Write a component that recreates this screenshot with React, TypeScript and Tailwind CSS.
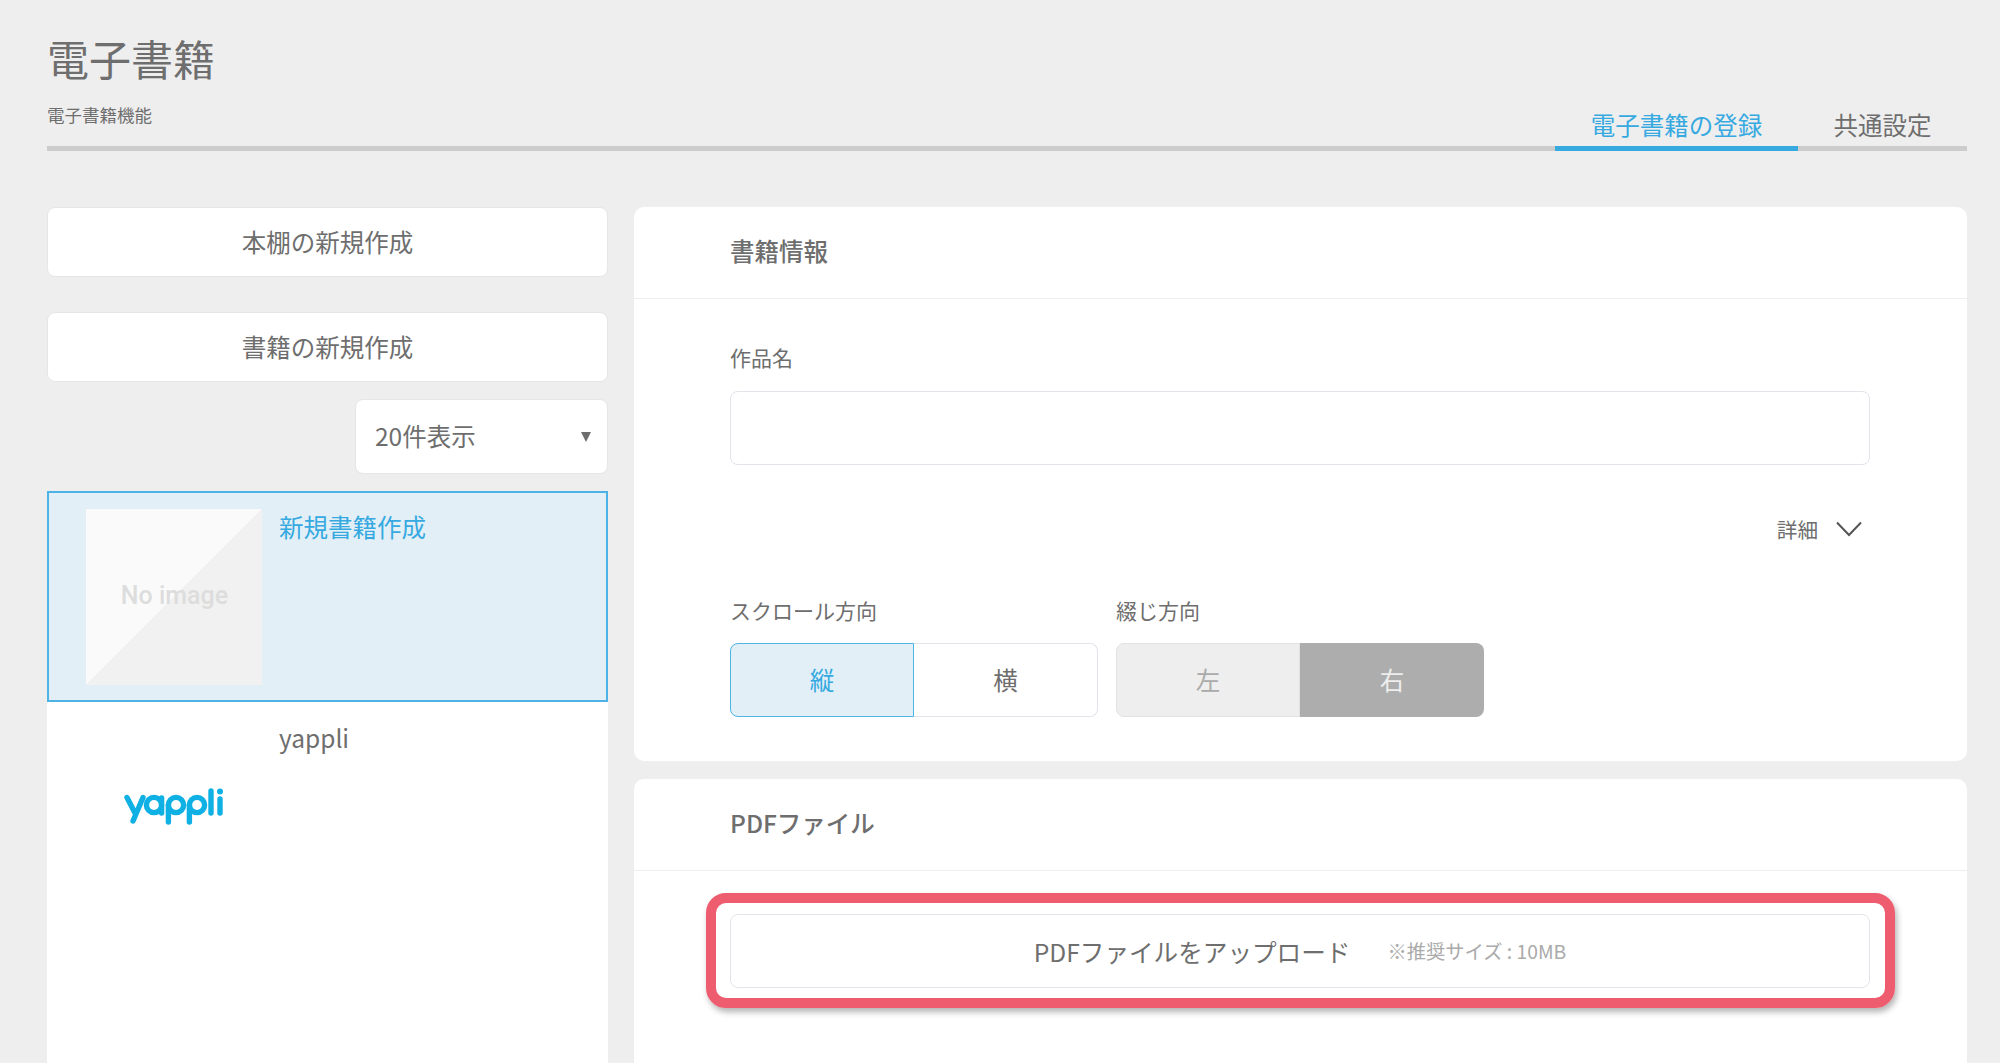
import React from "react";

function Logo() {
  return (
    <svg width="100" height="38" viewBox="0 0 100 38" fill="none" stroke="#0fb0e4" strokeWidth="5.4" strokeLinecap="round" aria-label="yappli">
      <path d="M3 9.5 L11 25 M19 9.5 L9 33" />
      <circle cx="30" cy="17" r="7.6" />
      <path d="M37.6 10 V25" />
      <circle cx="52" cy="17" r="7.6" />
      <path d="M44.4 17 V34" />
      <circle cx="73" cy="17" r="7.6" />
      <path d="M65.4 17 V34" />
      <path d="M87 3 V25" />
      <path d="M96 11 V25" />
      <circle cx="96" cy="3.5" r="3" fill="#0fb0e4" stroke="none" />
    </svg>
  );
}

export default function App() {
  return (
    <div className="h-[1063px] overflow-hidden bg-[#eeeeee] pl-[47px] pr-[33px] font-['Noto_Sans_CJK_JP','Noto_Sans',sans-serif] font-normal text-[#6e6e6e]">
      <header className="flex h-[151px] items-end justify-between border-b-[5px] border-[#cccccc]">
        <div className="pb-[18px]">
          <h1 className="text-[42px] leading-[60px] font-normal">電子書籍</h1>
          <p className="mt-[14px] text-[17.5px] leading-[26px]">電子書籍機能</p>
        </div>
        <nav className="-mb-[5px] flex text-[24.5px] leading-[36px]">
          <a className="w-[243px] border-b-[5px] border-[#36a9e1] pb-[3px] text-center text-[#36a9e1]">電子書籍の登録</a>
          <a className="w-[169px] border-b-[5px] border-transparent pb-[3px] text-center">共通設定</a>
        </nav>
      </header>

      <main className="mt-[56px] flex gap-[26px]">
        <aside className="flex w-[561px] flex-col">
          <button className="h-[70px] rounded-lg border border-[#e6e6e6] bg-white text-[24.5px]">本棚の新規作成</button>
          <button className="mt-[35px] h-[70px] rounded-lg border border-[#e6e6e6] bg-white text-[24.5px]">書籍の新規作成</button>
          <div className="mt-[17px] flex h-[75px] w-[253px] items-center justify-between self-end rounded-lg border border-[#e6e6e6] bg-white pl-[19px] pr-[16px] text-[24.5px]">
            <span>20件表示</span>
            <span className="h-0 w-0 border-x-[5.5px] border-t-[10px] border-x-transparent border-t-[#6e6e6e]" />
          </div>
          <div className="mt-[17px] h-[600px] bg-white">
            <div className="flex h-[211px] gap-[17px] border-2 border-[#4db3e6] bg-[#e2eff6] pl-[37px] pt-[16px]">
              <div className="flex h-[176px] w-[176px] items-center justify-center bg-[linear-gradient(to_bottom_right,#fafafa_50%,#f1f1f1_50%)] pb-[2px] pl-[1px] font-['Roboto',sans-serif] text-[25px] font-medium text-[#dddddd]">
                No image
              </div>
              <div className="text-[24.5px] leading-[36px] text-[#36a9e1]">新規書籍作成</div>
            </div>
            <div className="flex gap-[17px] pl-[39px] pt-[18px]">
              <div className="flex h-[175px] w-[176px] justify-center pt-[68px]">
                <Logo />
              </div>
              <div className="text-[24.5px] leading-[36px]">yappli</div>
            </div>
          </div>
        </aside>

        <section className="flex flex-1 flex-col gap-[18px]">
          <div className="h-[554px] rounded-[10px] bg-white">
            <h2 className="flex h-[92px] items-center border-b border-[#eeeeee] pb-[3px] pl-[96px] text-[24.5px] font-medium">書籍情報</h2>
            <div className="pl-[96px] pr-[97px]">
              <label className="mt-[43px] block text-[21px] leading-[30px]">作品名</label>
              <div className="mt-[19px] h-[74px] rounded-lg border border-[#e2e4ea]" />
              <div className="mt-[49px] flex h-[30px] items-center justify-end gap-[18px] pr-[8px]">
                <span className="text-[20.6px]">詳細</span>
                <svg width="26" height="16" viewBox="0 0 26 16" fill="none" stroke="#555555" strokeWidth="2">
                  <path d="M1 1.5 L13 14 L25 1.5" />
                </svg>
              </div>
              <div className="mt-[51px] flex gap-[18px]">
                <div>
                  <div className="text-[21px] leading-[30px]">スクロール方向</div>
                  <div className="mt-[18px] flex h-[74px] text-[24.5px]">
                    <div className="flex w-[184px] items-center justify-center rounded-l-lg border border-[#4db3e6] bg-[#e2eff6] text-[#36a9e1]">縦</div>
                    <div className="flex w-[184px] items-center justify-center rounded-r-lg border border-l-0 border-[#e2e4ea]">横</div>
                  </div>
                </div>
                <div>
                  <div className="text-[21px] leading-[30px]">綴じ方向</div>
                  <div className="mt-[18px] flex h-[74px] text-[24.5px]">
                    <div className="flex w-[184px] items-center justify-center rounded-l-lg border border-[#e2e2e2] bg-[#eeeeee] text-[#aaaaaa]">左</div>
                    <div className="flex w-[184px] items-center justify-center rounded-r-lg bg-[#adadad] text-[#eeeeee]">右</div>
                  </div>
                </div>
              </div>
            </div>
          </div>

          <div className="h-[400px] rounded-[10px] bg-white">
            <h2 className="flex h-[92px] items-center border-b border-[#eeeeee] pb-[3px] pl-[96px] text-[24.5px] font-medium">PDFファイル</h2>
            <div className="relative ml-[96px] mr-[97px] mt-[43px] flex h-[74px] items-center justify-center gap-[37px] rounded-lg border border-[#e2e4ea]">
              <span className="text-[24.6px]">PDFファイルをアップロード</span>
              <span className="text-[19.3px] text-[#aaaaaa]">※推奨サイズ : 10MB</span>
              <div className="absolute -bottom-[21px] -left-[25px] -right-[26px] -top-[22px] rounded-[20px] border-[10px] border-[#ee5c6f] shadow-[2px_4px_6px_rgba(0,0,0,0.3)]" />
            </div>
          </div>
        </section>
      </main>
    </div>
  );
}
